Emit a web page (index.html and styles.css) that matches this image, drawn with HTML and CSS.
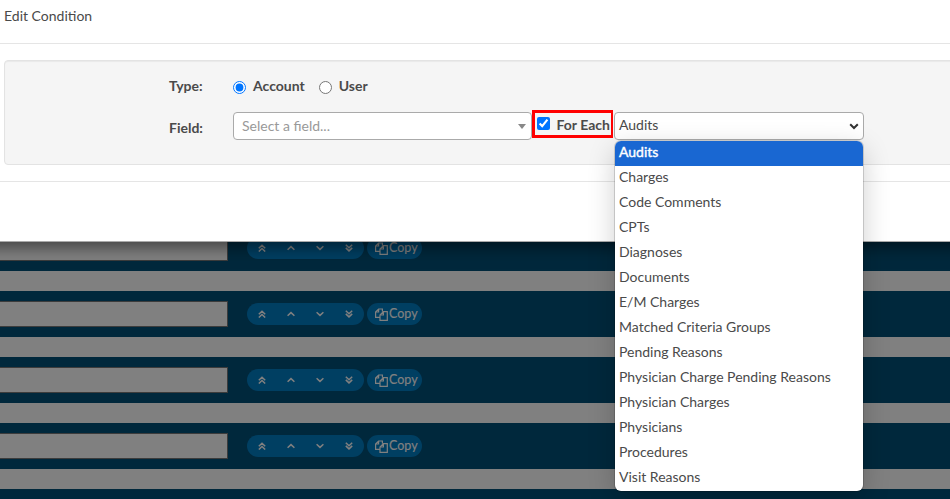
FILE: index.html
```html
<!DOCTYPE html>
<html lang="en">
<head>
<meta charset="utf-8">
<title>Edit Condition</title>
<link rel="stylesheet" href="styles.css">
</head>
<body>
<svg class="defs" aria-hidden="true">
  <symbol id="up2" viewBox="0 0 8 8"><path d="M.8 4.300 4 1.300l3.200 3M.8 7.500l3.200-3 3.200 3"/></symbol>
  <symbol id="up" viewBox="0 0 8 8"><path d="M.6 5.8 4 2.6l3.400 3.200"/></symbol>
  <symbol id="down" viewBox="0 0 8 8"><path d="M.6 2.200 4 5.400l3.400-3.200"/></symbol>
  <symbol id="down2" viewBox="0 0 8 8"><path d="M.8 .7l3.200 3 3.200-3M.8 3.900l3.200 3 3.200-3"/></symbol>
  <symbol id="copy" viewBox="0 0 13 13"><path d="M5 9.300H.6V4L3.600 1H7.400V3.600M.6 4H3.600V1M8.400 3.600h3.900v8.700H5V7ZM5 7H8.400V3.600"/></symbol>
</svg>
<div class="rows">
  <div class="row"><div class="box"></div><div class="pill moves"><svg><use href="#up2"/></svg><svg><use href="#up"/></svg><svg><use href="#down"/></svg><svg><use href="#down2"/></svg></div><div class="pill copy"><svg><use href="#copy"/></svg>Copy</div></div>
  <div class="row"><div class="box"></div><div class="pill moves"><svg><use href="#up2"/></svg><svg><use href="#up"/></svg><svg><use href="#down"/></svg><svg><use href="#down2"/></svg></div><div class="pill copy"><svg><use href="#copy"/></svg>Copy</div></div>
  <div class="row"><div class="box"></div><div class="pill moves"><svg><use href="#up2"/></svg><svg><use href="#up"/></svg><svg><use href="#down"/></svg><svg><use href="#down2"/></svg></div><div class="pill copy"><svg><use href="#copy"/></svg>Copy</div></div>
  <div class="row"><div class="box"></div><div class="pill moves"><svg><use href="#up2"/></svg><svg><use href="#up"/></svg><svg><use href="#down"/></svg><svg><use href="#down2"/></svg></div><div class="pill copy"><svg><use href="#copy"/></svg>Copy</div></div>
  <div class="row last"></div>
</div>
<div class="modal">
  <div class="header">Edit Condition</div>
  <div class="body">
    <div class="well">
      <div class="line type">
        <span class="label">Type:</span>
        <label class="radio"><input type="radio" name="type" checked>Account</label>
        <label class="radio"><input type="radio" name="type">User</label>
      </div>
      <div class="line field">
        <span class="label">Field:</span>
        <div class="combo">Select a field...<i class="caret"></i></div>
        <label class="each"><input type="checkbox" checked>For Each</label>
        <div class="select">Audits<svg class="chevron" viewBox="0 0 10 7"><path d="M1.200 1.200 5 5l3.800-3.800"/></svg>
          <div class="menu">
            <div class="item active">Audits</div>
            <div class="item">Charges</div>
            <div class="item">Code Comments</div>
            <div class="item">CPTs</div>
            <div class="item">Diagnoses</div>
            <div class="item">Documents</div>
            <div class="item">E/M Charges</div>
            <div class="item">Matched Criteria Groups</div>
            <div class="item">Pending Reasons</div>
            <div class="item">Physician Charge Pending Reasons</div>
            <div class="item">Physician Charges</div>
            <div class="item">Physicians</div>
            <div class="item">Procedures</div>
            <div class="item">Visit Reasons</div>
          </div>
        </div>
      </div>
    </div>
  </div>
  <div class="footer"></div>
</div>
</body>
</html>
```
FILE: styles.css
```css
* { box-sizing: border-box; }
html { overflow: hidden; }
body { margin: 0; height: 499px; overflow: hidden; position: relative; background: #808080; font: 14px/20px Lato, sans-serif; color: #4a4a4a; }
.defs { position: absolute; width: 0; height: 0; }
.rows { padding-top: 225px; }
.row { height: 46px; margin-bottom: 20px; padding: 10px 0; background: #00283c; display: flex; align-items: center; }
.row.last { height: 10px; margin: 0; padding: 0; }
.box { width: 228px; height: 26px; background: #808080; border: 1px solid #3c3c3c; border-left: 0; margin-right: 19px; }
.pill { height: 22px; border-radius: 11px; background: #003f62; color: #808080; display: flex; align-items: center; }
.pill svg { fill: none; stroke: currentColor; }
.moves { width: 117px; margin-right: 3px; padding-left: 11px; gap: 21px; }
.moves svg { width: 8px; height: 8px; stroke-width: 1.5; }
.copy { width: 55px; padding-left: 8px; font-size: 12.5px; -webkit-text-stroke: .2px #808080; }
.copy svg { width: 13px; height: 13px; stroke-width: 1.2; margin-right: 1px; flex: none; }
.modal { position: absolute; top: 0; left: -40px; right: -40px; padding-left: 40px; height: 242px; background: #fff; border-bottom: 1px solid #aaa; box-shadow: 0 5px 15px rgba(0,0,0,.5); }
.header { height: 44px; padding: 6px 4px; border-bottom: 1px solid #e5e5e5; }
.body { padding: 16px 0 16px 4px; }
.well { height: 105px; width: 960px; background: #f5f5f5; border: 1px solid #e3e3e3; border-radius: 4px; box-shadow: inset 0 1px 1px rgba(0,0,0,.05); padding-top: 14px; }
.footer { border-top: 1px solid #e5e5e5; }
.line { display: flex; font-weight: 700; }
.label { width: 64px; margin-left: 164px; flex: none; }
.type { height: 36px; padding-top: 1px; }
.radio { display: flex; margin-right: 14px; }
.radio input { width: 13px; height: 13px; margin: 5px 7px 0 0; }
.field { align-items: flex-start; }
.field .label { margin-top: 7px; }
.combo { width: 299px; height: 28px; border: 1px solid #aaa; border-radius: 4px; background: #fff; color: #999; font-weight: 400; display: flex; align-items: center; justify-content: space-between; padding: 0 5px 0 8px; margin-top: 1px; }
.caret { border: 4px solid transparent; border-top: 5px solid #888; border-bottom: 0; }
.each { width: 81px; height: 28px; border: 3px solid #f00; border-right-width: 2px; display: flex; margin: -1px 1px 0 0; padding-left: 2px; white-space: nowrap; line-height: 23px; }
.each input { width: 13px; height: 13px; margin: 4px 6.5px 0 0; flex: none; }
.select { position: relative; width: 250px; height: 28px; margin-top: 1px; border: 1px solid #aaa; border-radius: 4px; background: #fff; padding: 2px 4px; font-weight: 400; display: flex; justify-content: space-between; }
.chevron { width: 10px; height: 7px; fill: none; stroke: #333; stroke-width: 2; margin-top: 8px; }
.menu { position: absolute; top: 28px; left: 0; width: 248px; height: 350px; background: #fff; border-radius: 6px; overflow: hidden; box-shadow: 0 0 0 1px rgba(0,0,0,.15), 0 8px 28px rgba(0,0,0,.2); }
.item { height: 25px; padding: 1px 4px; }
.active { background: #1967d2; color: #fff; -webkit-text-stroke: .4px #fff; }
```
